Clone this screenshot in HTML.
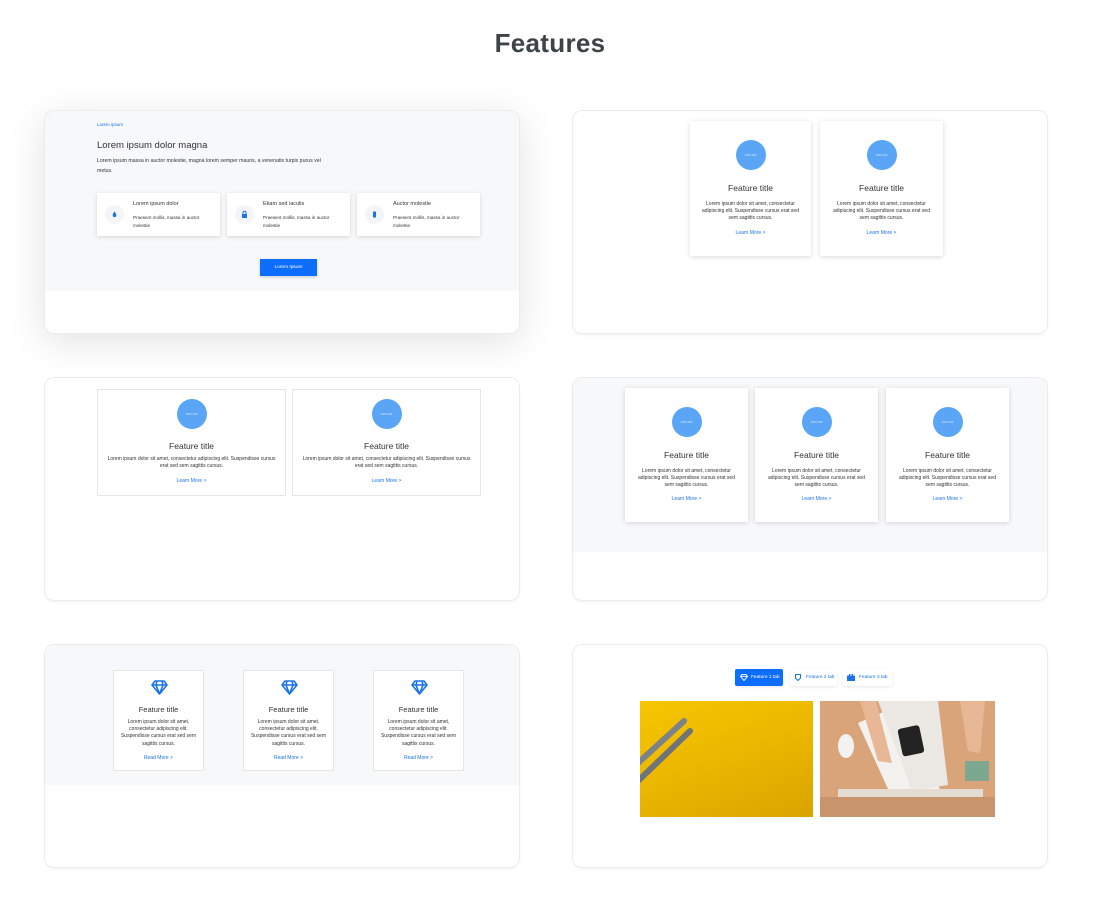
<!DOCTYPE html>
<html><head><meta charset="utf-8"><style>
*{margin:0;padding:0;box-sizing:border-box}
body{width:1100px;height:900px;background:#fff;font-family:"Liberation Sans",sans-serif;position:relative;overflow:hidden;color:#333}
.a{position:absolute}
h1{position:absolute;left:0;width:1100px;top:28px;text-align:center;font-size:26px;font-weight:bold;color:#3d4448;letter-spacing:0.3px}
.p{position:absolute;width:474px;height:222px;border-radius:9px;background:#fff;box-shadow:0 0 0 1px #ececec,0 2px 4px rgba(0,0,0,.06);overflow:hidden}
.gray{position:absolute;left:0;top:0;width:100%;background:#f7f8fa}
.card{position:absolute;background:#fff;text-align:center}
.sh{box-shadow:0 1px 5px rgba(0,0,0,.15)}
.bd{border:1px solid #e6e6e6}
.circ{position:absolute;left:50%;width:30px;height:30px;margin-left:-15px;border-radius:50%;background:#5aa5f5;color:#d8e8fb;font-size:3px;line-height:30px}
.ft{position:absolute;left:0;width:100%;font-size:8.5px;color:#333}
.tx{position:absolute;left:0;width:100%;font-size:5px;line-height:7.2px;color:#333;padding:0 8px}
.lk{position:absolute;left:0;width:100%;font-size:5px;color:#1a73e8}
.fc{position:absolute;top:82px;width:123px;height:43px;background:#fff;box-shadow:0 1px 4px rgba(0,0,0,.15)}
.fc .ic{position:absolute;left:8px;top:12px;width:19px;height:19px;border-radius:50%;background:#f3f5f8}
.fc .t1{position:absolute;left:36px;top:8px;font-size:5.5px;color:#333}
.fc .t2{position:absolute;left:36px;top:21px;font-size:4.6px;line-height:8px;color:#333;width:82px}
.tab{position:absolute;top:24px;height:17px;font-size:4.8px;line-height:17px;border-radius:2px;padding-left:16px;color:#1a73e8;background:#fff;box-shadow:0 1px 3px rgba(0,0,0,.1)}
</style></head><body>
<h1>Features</h1>

<div class="p" style="left:45px;top:111px;box-shadow:0 0 0 1px #ececec,0 8px 40px rgba(0,0,0,.12)">
 <div class="gray" style="height:180px"></div>
 <div class="a" style="left:52px;top:11px;font-size:4.5px;color:#1a73e8">Lorem ipsum</div>
 <div class="a" style="left:52px;top:29px;font-size:9.5px;color:#333">Lorem ipsum dolor magna</div>
 <div class="a" style="left:52px;top:46px;font-size:5.2px;line-height:9.5px;color:#333;width:225px">Lorem ipsum massa in auctor molestie, magna lorem semper mauris, a venenatis turpis purus vel metus.</div>
 <div class="fc" style="left:52px"><div class="ic"><svg width="19" height="19" viewBox="0 0 19 19"><path d="M9.5 6.5 C8.5 8 7.7 9 7.7 10.3 a1.8 1.8 0 0 0 3.6 0 C11.3 9 10.5 8 9.5 6.5Z" fill="#1a73e8"/></svg></div><div class="t1">Lorem ipsum dolor</div><div class="t2">Praesent mollis, massa in auctor molestie</div></div>
 <div class="fc" style="left:182px"><div class="ic"><svg width="19" height="19" viewBox="0 0 19 19"><rect x="7" y="9" width="5" height="4" fill="#1a73e8"/><path d="M8 9V7.8a1.5 1.5 0 0 1 3 0V9" stroke="#1a73e8" fill="none" stroke-width="1"/></svg></div><div class="t1">Etiam sed iaculis</div><div class="t2">Praesent mollis, massa in auctor molestie</div></div>
 <div class="fc" style="left:312px"><div class="ic"><svg width="19" height="19" viewBox="0 0 19 19"><rect x="8" y="6.5" width="3" height="6" rx=".5" fill="#1a73e8"/></svg></div><div class="t1">Auctor molestie</div><div class="t2">Praesent mollis, massa in auctor molestie</div></div>
 <div class="a" style="left:215px;top:148px;width:57px;height:17px;background:#0d6efd;color:#fff;font-size:4.8px;line-height:17px;text-align:center;box-shadow:0 1px 3px rgba(0,0,0,.2)">Lorem Ipsum</div>
</div>

<div class="p" style="left:573px;top:111px">
 <div class="card sh" style="left:117px;top:10px;width:121px;height:135px"><div class="circ" style="top:19px">195×195</div><div class="ft" style="top:62px">Feature title</div><div class="tx" style="top:80px">Lorem ipsum dolor sit amet, consectetur adipiscing elit. Suspendisse cursus erat sed sem sagittis cursus.</div><div class="lk" style="top:109px">Learn More &gt;</div></div>
 <div class="card sh" style="left:247px;top:10px;width:123px;height:135px"><div class="circ" style="top:19px">195×195</div><div class="ft" style="top:62px">Feature title</div><div class="tx" style="top:80px">Lorem ipsum dolor sit amet, consectetur adipiscing elit. Suspendisse cursus erat sed sem sagittis cursus.</div><div class="lk" style="top:109px">Learn More &gt;</div></div>
</div>

<div class="p" style="left:45px;top:378px">
 <div class="card bd" style="left:52px;top:11px;width:189px;height:107px"><div class="circ" style="top:9px">195×195</div><div class="ft" style="top:51px">Feature title</div><div class="tx" style="top:66px;padding:0 6px">Lorem ipsum dolor sit amet, consectetur adipiscing elit. Suspendisse cursus erat sed sem sagittis cursus.</div><div class="lk" style="top:88px">Learn More &gt;</div></div>
 <div class="card bd" style="left:247px;top:11px;width:189px;height:107px"><div class="circ" style="top:9px">195×195</div><div class="ft" style="top:51px">Feature title</div><div class="tx" style="top:66px;padding:0 6px">Lorem ipsum dolor sit amet, consectetur adipiscing elit. Suspendisse cursus erat sed sem sagittis cursus.</div><div class="lk" style="top:88px">Learn More &gt;</div></div>
</div>

<div class="p" style="left:573px;top:378px">
 <div class="gray" style="height:174px"></div>
 <div class="card sh" style="left:52px;top:10px;width:123px;height:134px"><div class="circ" style="top:19px">195×195</div><div class="ft" style="top:62px">Feature title</div><div class="tx" style="top:80px">Lorem ipsum dolor sit amet, consectetur adipiscing elit. Suspendisse cursus erat sed sem sagittis cursus.</div><div class="lk" style="top:108px">Learn More &gt;</div></div>
 <div class="card sh" style="left:182px;top:10px;width:123px;height:134px"><div class="circ" style="top:19px">195×195</div><div class="ft" style="top:62px">Feature title</div><div class="tx" style="top:80px">Lorem ipsum dolor sit amet, consectetur adipiscing elit. Suspendisse cursus erat sed sem sagittis cursus.</div><div class="lk" style="top:108px">Learn More &gt;</div></div>
 <div class="card sh" style="left:313px;top:10px;width:123px;height:134px"><div class="circ" style="top:19px">195×195</div><div class="ft" style="top:62px">Feature title</div><div class="tx" style="top:80px">Lorem ipsum dolor sit amet, consectetur adipiscing elit. Suspendisse cursus erat sed sem sagittis cursus.</div><div class="lk" style="top:108px">Learn More &gt;</div></div>
</div>

<div class="p" style="left:45px;top:645px">
 <div class="gray" style="height:140px"></div>
 <div class="card bd" style="left:68px;top:25px;width:91px;height:101px"><svg class="a" style="left:37px;top:9px" width="17" height="15" viewBox="0 0 17 15"><path d="M4 1h9l3 4-7.5 9L1 5z M1 5h15 M6 1 5 5l3.5 9L12 5 11 1" fill="none" stroke="#1a73e8" stroke-width="1.6" stroke-linejoin="round"/></svg><div class="ft" style="top:34px;font-size:7.5px">Feature title</div><div class="tx" style="top:48px;padding:0 5px">Lorem ipsum dolor sit amet, consectetur adipiscing elit. Suspendisse cursus erat sed sem sagittis cursus.</div><div class="lk" style="top:84px">Read More &gt;</div></div>
 <div class="card bd" style="left:198px;top:25px;width:91px;height:101px"><svg class="a" style="left:37px;top:9px" width="17" height="15" viewBox="0 0 17 15"><path d="M4 1h9l3 4-7.5 9L1 5z M1 5h15 M6 1 5 5l3.5 9L12 5 11 1" fill="none" stroke="#1a73e8" stroke-width="1.6" stroke-linejoin="round"/></svg><div class="ft" style="top:34px;font-size:7.5px">Feature title</div><div class="tx" style="top:48px;padding:0 5px">Lorem ipsum dolor sit amet, consectetur adipiscing elit. Suspendisse cursus erat sed sem sagittis cursus.</div><div class="lk" style="top:84px">Read More &gt;</div></div>
 <div class="card bd" style="left:328px;top:25px;width:91px;height:101px"><svg class="a" style="left:37px;top:9px" width="17" height="15" viewBox="0 0 17 15"><path d="M4 1h9l3 4-7.5 9L1 5z M1 5h15 M6 1 5 5l3.5 9L12 5 11 1" fill="none" stroke="#1a73e8" stroke-width="1.6" stroke-linejoin="round"/></svg><div class="ft" style="top:34px;font-size:7.5px">Feature title</div><div class="tx" style="top:48px;padding:0 5px">Lorem ipsum dolor sit amet, consectetur adipiscing elit. Suspendisse cursus erat sed sem sagittis cursus.</div><div class="lk" style="top:84px">Read More &gt;</div></div>
</div>

<div class="p" style="left:573px;top:645px">
 <div class="tab" style="left:162px;width:48px;background:#0d6efd;color:#fff"><svg class="a" style="left:5px;top:5px" width="8" height="7" viewBox="0 0 17 15"><path d="M4 1h9l3 4-7.5 9L1 5z M1 5h15" fill="none" stroke="#fff" stroke-width="2"/></svg>Feature 1 tab</div>
 <div class="tab" style="left:217px;width:47px"><svg class="a" style="left:5px;top:5px" width="6" height="7" viewBox="0 0 6 7"><path d="M.5.5h5v3.5L3 6.5.5 4z" fill="none" stroke="#1a73e8"/></svg>Feature 2 tab</div>
 <div class="tab" style="left:270px;width:49px"><svg class="a" style="left:4px;top:5px" width="8" height="7" viewBox="0 0 8 7"><rect x="0" y="1.5" width="8" height="5.5" fill="#1a73e8"/><rect x="2.5" y="0" width="3" height="2" fill="none" stroke="#1a73e8"/></svg>Feature 3 tab</div>
 <div class="a" style="left:67px;top:56px;width:173px;height:116px;background:linear-gradient(160deg,#f7c600,#e8b300 60%,#d9a400);overflow:hidden">
  <svg width="173" height="116"><g stroke-linecap="round"><line x1="-2" y1="62" x2="44" y2="20" stroke="#7d8286" stroke-width="6"/><line x1="-2" y1="80" x2="50" y2="30" stroke="#6f7478" stroke-width="6"/></g></svg>
 </div>
 <div class="a" style="left:247px;top:56px;width:175px;height:116px;background:#d9a47a;overflow:hidden">
  <svg width="175" height="116"><polygon points="38,22 70,8 120,88 68,88" fill="#f4f2ef"/><polygon points="58,0 118,0 128,84 92,90" fill="#ebe8e4"/><rect x="80" y="26" width="22" height="28" rx="3" fill="#222" transform="rotate(-12 90 40)"/><ellipse cx="26" cy="45" rx="8" ry="12" fill="#f2f2f2"/><rect x="18" y="88" width="145" height="8" fill="#e4dcd2"/><rect x="0" y="96" width="175" height="20" fill="#c8946c"/><path d="M40 0 L58 60 L72 62 L56 0z M140 0 L148 50 L160 52 L165 0z" fill="#e8b796"/><rect x="145" y="60" width="24" height="20" fill="#5a9" opacity=".7"/></svg>
 </div>
</div>
</body></html>
